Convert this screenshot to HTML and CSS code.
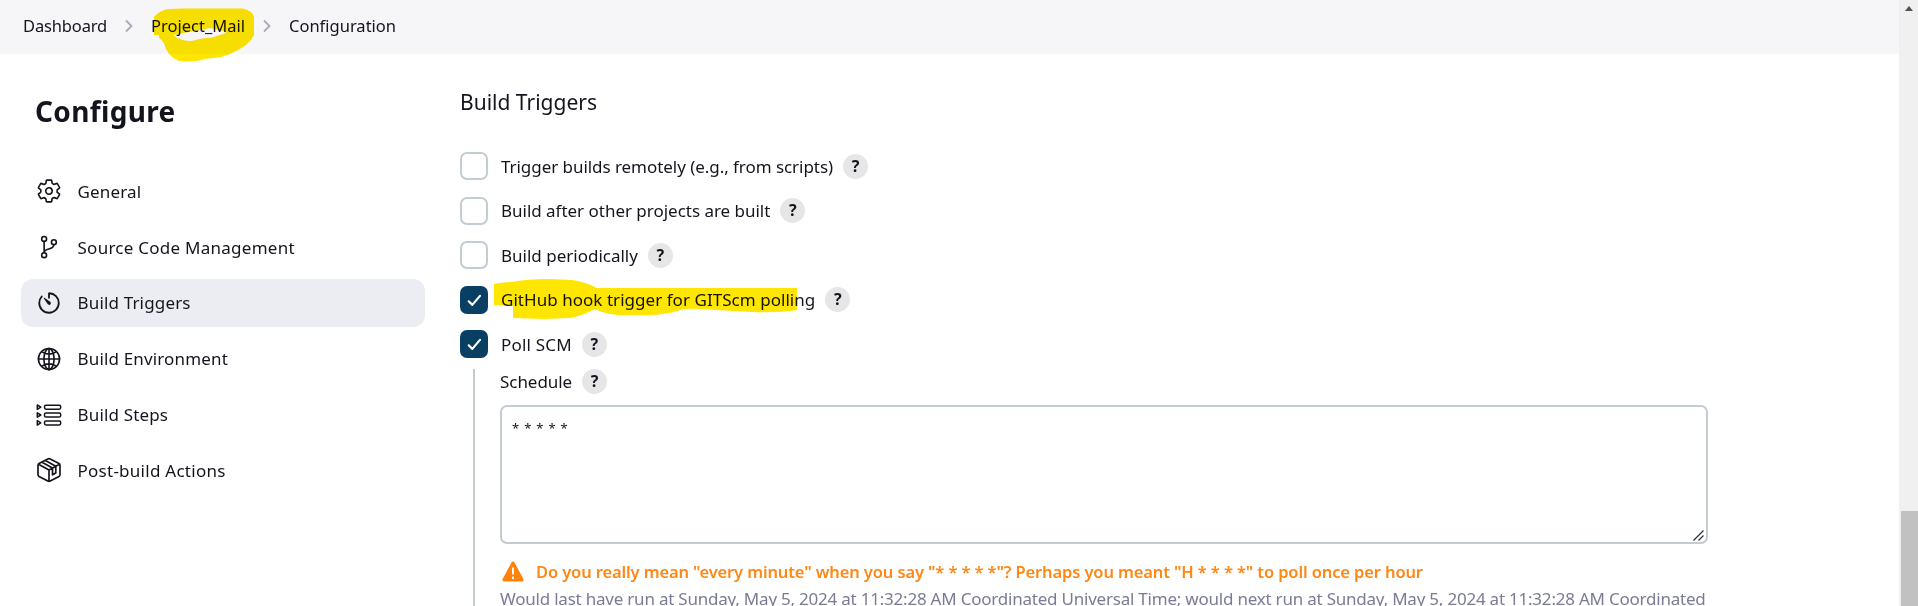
FILE: index.html
```html
<!DOCTYPE html>
<html lang="en">
<head>
<meta charset="utf-8">
<title>Project_Mail Config</title>
<link rel="stylesheet" href="styles.css">
</head>
<body>
<div class="viewport">
  <div class="page">
    <header class="breadcrumbs">
      <a class="crumb crumb-root">Dashboard</a>
      <svg class="chevron" viewBox="0 0 10 14"><path d="M2 1.500 7.500 7 2 12.500"/></svg>
      <a class="crumb crumb-project">Project_Mail
        <svg class="marker marker-project" viewBox="0 0 104 56"><path d="M4 10Q10 3 18 2L34 1.500 93 1.500Q103 4 104 10L104 28Q100 38 82 46Q72 51 58 51.500Q46 55 34 54.500Q22 54 16 42Q14 34 9 31L9 28 4 28ZM23 28Q30 34 42 34Q50 31 62 30.500L76 26 74 24 60 21Z" fill-rule="evenodd"/></svg>
      </a>
      <svg class="chevron chevron-last" viewBox="0 0 10 14"><path d="M2 1.500 7.500 7 2 12.500"/></svg>
      <a class="crumb crumb-config">Configuration</a>
    </header>
    <div class="columns">
      <aside class="sidebar">
        <h1 class="title"><span>Configure</span></h1>
        <nav class="tasks">
          <a class="task"><svg class="icon" viewBox="0 0 512 512"><path d="M262.290 192.310a64 64 0 1 0 57.400 57.400 64.130 64.130 0 0 0-57.400-57.400zM416.390 256a154.340 154.340 0 0 1-1.530 20.790l45.210 35.460a10.810 10.810 0 0 1 2.450 13.750l-42.770 74a10.810 10.810 0 0 1-13.140 4.590l-44.900-18.080a16.110 16.110 0 0 0-15.170 1.750A164.480 164.480 0 0 1 325 400.800a15.940 15.940 0 0 0-8.820 12.140l-6.730 47.890a11.080 11.080 0 0 1-10.680 9.170h-85.540a11.110 11.110 0 0 1-10.690-8.870l-6.720-47.820a16.070 16.070 0 0 0-9-12.220 155.300 155.300 0 0 1-21.460-12.570 16 16 0 0 0-15.110-1.710l-44.890 18.070a10.810 10.810 0 0 1-13.140-4.580l-42.770-74a10.800 10.800 0 0 1 2.450-13.750l38.210-30a16.050 16.050 0 0 0 6-14.080c-.36-4.170-.58-8.330-.58-12.500s.21-8.270.58-12.350a16 16 0 0 0-6.070-13.940l-38.190-30A10.810 10.810 0 0 1 49.480 186l42.770-74a10.810 10.810 0 0 1 13.140-4.590l44.900 18.080a16.110 16.110 0 0 0 15.170-1.750A164.480 164.480 0 0 1 187 111.200a15.940 15.940 0 0 0 8.820-12.140l6.730-47.890A11.080 11.080 0 0 1 213.230 42h85.540a11.110 11.110 0 0 1 10.690 8.870l6.720 47.820a16.070 16.070 0 0 0 9 12.220 155.300 155.300 0 0 1 21.460 12.570 16 16 0 0 0 15.110 1.710l44.890-18.070a10.810 10.810 0 0 1 13.140 4.580l42.770 74a10.800 10.800 0 0 1-2.450 13.750l-38.210 30a16.050 16.050 0 0 0-6.050 14.080c.33 4.140.55 8.300.55 12.470z"/></svg><span>General</span></a>
          <a class="task task-wide"><svg class="icon" viewBox="0 0 512 512"><circle cx="160" cy="96" r="48"/><circle cx="160" cy="416" r="48"/><circle cx="352" cy="160" r="48"/><path d="M160 368V144M352 208c0 128-192 48-192 160"/></svg><span>Source Code Management</span></a>
          <a class="task active"><svg class="icon heavy" viewBox="0 0 512 512"><path d="M112.910 128A191.850 191.850 0 0 0 64 254c-1.180 106.350 85.650 193.800 192 194 106.200.2 192-85.830 192-192 0-104.540-83.550-189.610-187.500-192a4.360 4.360 0 0 0-4.500 4.370V152"/><path class="solid" d="m233.380 278.630-79-113a8.130 8.130 0 0 1 11.320-11.320l113 79a32.500 32.500 0 0 1-37.250 53.260 33.210 33.210 0 0 1-8.070-7.940z"/></svg><span>Build Triggers</span></a>
          <a class="task"><svg class="icon" viewBox="0 0 512 512"><circle cx="256" cy="256" r="208"/><ellipse cx="256" cy="256" rx="100" ry="208"/><path d="M256 48v416M48 256h416M117 117c38 27 87 43 139 43s101-16 139-43M117 395c38-27 87-43 139-43s101 16 139 43"/></svg><span>Build Environment</span></a>
          <a class="task"><svg class="icon thin" viewBox="0 0 26 26"><path d="M1.300 3 4.800 5.200 1.300 7.400ZM1.300 10.800 4.800 13 1.300 15.200ZM1.300 18.700 4.800 20.900 1.300 23.100Z"/><rect x="8.500" y="3.200" width="16.200" height="4" rx="1.600"/><rect x="8.500" y="11" width="16.200" height="4" rx="1.600"/><rect x="8.500" y="18.900" width="16.200" height="4" rx="1.600"/></svg><span>Build Steps</span></a>
          <a class="task task-wide"><svg class="icon package" viewBox="0 0 26 26"><path d="M11.800 1.900Q13 1.300 14.200 1.900L23 6.600Q24 7.200 24 8.400V17.600Q24 18.800 23 19.400L14.200 24.100Q13 24.700 11.800 24.100L3 19.400Q2 18.800 2 17.600V8.400Q2 7.200 3 6.600ZM2.500 7.300 13 13 23.500 7.300M13 13V24.400M6 5.200 16.500 11V17.800L19.800 16V9.200L9.400 3.400"/></svg><span>Post-build Actions</span></a>
        </nav>
      </aside>
      <main class="content">
        <h2 class="section-title"><span>Build Triggers</span></h2>
        <div class="options">
          <label class="option"><i class="box"></i><span class="label label-remote">Trigger builds remotely (e.g., from scripts)</span><b class="help">?</b></label>
          <label class="option"><i class="box"></i><span class="label label-after">Build after other projects are built</span><b class="help">?</b></label>
          <label class="option"><i class="box"></i><span class="label">Build periodically</span><b class="help">?</b></label>
          <label class="option"><i class="box checked"><svg viewBox="0 0 28 28"><path d="M8.700 15.300 12.300 18.900 20 9.900"/></svg></i><span class="label label-hook">GitHub hook trigger for GITScm polling</span><b class="help">?</b>
            <svg class="marker marker-hook" viewBox="0 0 304 40"><path d="M0 5Q8 3.500 18 3Q32 0 55 0L78 1Q92 3 103 9L303 9V31Q285 34 258 33L222 31Q205 29 190 30Q172 36 155 36H125Q110 35 101 30Q88 37 76 39L50 40 19 39V27L0 26Z"/></svg>
          </label>
          <label class="option"><i class="box checked"><svg viewBox="0 0 28 28"><path d="M8.700 15.300 12.300 18.900 20 9.900"/></svg></i><span class="label label-poll">Poll SCM</span><b class="help">?</b></label>
        </div>
        <section class="nested">
          <div class="field-head"><span class="label label-schedule">Schedule</span><b class="help">?</b></div>
          <div class="textarea"><span class="cron">* * * * *</span>
            <svg class="grip" viewBox="0 0 11 11"><path d="M.5 10.500 10.500 .5M5.500 10.500 10.500 5.500"/></svg>
          </div>
          <p class="warning"><svg class="warn-icon" viewBox="0 0 22 21"><path d="M11 .5Q12 .5 12.500 1.500L21.500 18.200Q22 20.500 20 20.500H2Q0 20.500 .5 18.200L9.500 1.500Q10 .5 11 .5Z"/><path class="bang" d="M11 6.500V13.500M11 15.500V18"/></svg><span>Do you really mean "every minute" when you say "* * * * *"? Perhaps you meant "H * * * *" to poll once per hour</span></p>
          <p class="runs"><span>Would last have run at Sunday, May 5, 2024 at 11:32:28 AM Coordinated Universal Time; would next run at Sunday, May 5, 2024 at 11:32:28 AM Coordinated</span></p>
        </section>
      </main>
    </div>
  </div>
  <div class="scrollbar"><i class="arrow"></i><i class="thumb"></i></div>
</div>
</body>
</html>
```
FILE: styles.css
```css
* { box-sizing: border-box; }
html, body { height: 606px; overflow: hidden; }
body { margin: 0; background: #fff; color: #14141f; font: 17px/24px "Noto Sans", "Open Sans", sans-serif; }
h1, h2, p { margin: 0; }
span, a { white-space: nowrap; }
.viewport { display: flex; width: 1918px; height: 606px; overflow: hidden; }
.page { flex: 1; min-width: 0; }
.breadcrumbs { display: flex; align-items: center; height: 54px; padding: 0 0 2px 23px; background: #f6f6f8; }
.crumb { position: relative; font-size: 16.500px; }
.crumb-root { width: 101px; letter-spacing: -.15px; }
.chevron { width: 10px; height: 14px; margin-right: 17px; fill: none; stroke: #a9a9bb; stroke-width: 1.800; }
.crumb-project { width: 111px; }
.marker { position: absolute; fill: #ffe600; mix-blend-mode: multiply; }
.marker-project { left: -1px; top: -7px; width: 104px; height: 56px; }
.columns { display: flex; }
.sidebar { width: 425px; padding: 37px 0 0 21px; }
.title { padding-left: 14px; font-size: 28px; line-height: 40px; font-weight: 700; letter-spacing: .35px; }
.tasks { display: flex; flex-direction: column; gap: 7px; margin-top: 36px; }
.task { display: flex; align-items: center; gap: 15.500px; height: 48.800px; padding-left: 15px; border-radius: 12px; letter-spacing: .16px; }
.task-wide { letter-spacing: .26px; }
.task span { padding-top: 1px; }
.active { background: #ecedf3; }
.icon { width: 26px; height: 26px; fill: none; stroke: #14141f; stroke-width: 32; stroke-linecap: round; stroke-linejoin: round; }
.thin { stroke-width: 1.500; }
.package { stroke-width: 1.700; }
.heavy { stroke-width: 36; }
.solid { fill: #14141f; stroke: none; }
.content { flex: 1; padding: 33px 0 0 35px; }
.section-title { font-size: 21px; line-height: 30px; font-weight: 400; }
.options { display: flex; flex-direction: column; margin-top: 27px; }
.option { position: relative; display: flex; align-items: center; height: 44.500px; }
.box { width: 28px; height: 28px; margin-right: 13px; border: 2px solid #c3ccd1; border-radius: 7px; }
.label { padding-top: 1px; }
.label-remote { letter-spacing: -.05px; }
.label-after { letter-spacing: -.02px; }
.label-hook { letter-spacing: .04px; }
.label-poll { letter-spacing: .2px; }
.label-schedule { letter-spacing: -.05px; }
.checked { background: #083f62; border: 0; }
.checked svg { display: block; width: 28px; height: 28px; fill: none; stroke: #fff; stroke-width: 2.200; stroke-linecap: round; stroke-linejoin: round; }
.help { display: block; width: 25px; height: 25px; margin-left: 10px; border-radius: 50%; background: #e6e6e6; font-size: 16px; line-height: 25px; text-align: center; }
.marker-hook { left: 34px; top: 1px; width: 304px; height: 40px; }
.nested { width: 1235px; height: 240px; margin: 2px 0 0 13px; padding-left: 25px; border-left: 2px solid #c3ccd1; }
.field-head { display: flex; align-items: center; height: 25px; }
.textarea { position: relative; width: 1208px; height: 139px; margin-top: 11px; padding: 9px 10px; border: 2px solid #c3ccd1; border-radius: 7px; }
.cron { display: block; width: max-content; font-size: 13px; word-spacing: 1.600px; }
.grip { position: absolute; right: 2px; bottom: 1px; width: 11px; height: 11px; fill: none; stroke: #333; stroke-width: 1.300; }
.warning { display: flex; align-items: center; height: 28px; margin-top: 14px; padding-left: 2px; color: #ff8713; font-size: 16.500px; font-weight: 600; letter-spacing: -.12px; }
.warn-icon { width: 22px; height: 21px; margin-right: 12px; fill: #ff820a; }
.bang { stroke: #fff; stroke-width: 2; }
.runs { padding-top: 1px; color: #7b7b96; letter-spacing: -.22px; }
.scrollbar { position: relative; width: 19px; background: #f0f0f0; }
.arrow { position: absolute; left: 6px; top: 6px; border: 4.500px solid transparent; border-top: 0; border-bottom: 5px solid #505050; }
.thumb { position: absolute; left: 2px; right: 0; top: 511px; bottom: 0; background: #c1c1c1; }
```
